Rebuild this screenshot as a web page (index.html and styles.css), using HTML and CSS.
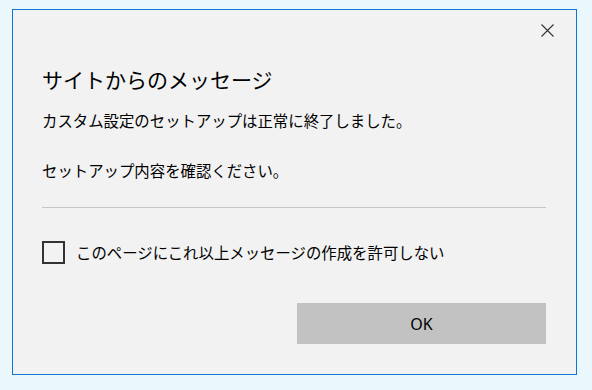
FILE: index.html
```html
<!DOCTYPE html>
<html lang="ja">
<head>
<meta charset="utf-8">
<link rel="stylesheet" href="styles.css">
</head>
<body>
<div class="dialog">
  <div class="header">
    <svg class="close" width="13" height="13" viewBox="0 0 13 13"><path d="M0.5 0.5 L12.5 12.5 M12.5 0.5 L0.5 12.5" stroke="#333" stroke-width="1.1" fill="none"/></svg>
  </div>
  <div class="content">
    <h1 class="title">サイトからのメッセージ</h1>
    <p class="msg msg1">カスタム設定のセットアップは正常に終了しました。</p>
    <p class="msg msg2">セットアップ内容を確認ください。</p>
    <div class="sep"></div>
    <label class="check">
      <span class="box"></span>
      <span class="check-text">このページにこれ以上メッセージの作成を許可しない</span>
    </label>
    <div class="actions">
      <button class="ok">OK</button>
    </div>
  </div>
</div>
</body>
</html>
```
FILE: styles.css
```css
html, body {
  margin: 0;
  padding: 0;
}
body {
  width: 592px;
  height: 390px;
  background: #eaf8fe;
  font-family: "Noto Sans CJK JP", "Noto Sans", sans-serif;
  color: #000;
  overflow: hidden;
}
.dialog {
  box-sizing: border-box;
  margin: 9px 0 0 12px;
  width: 565px;
  height: 366px;
  border: 1px solid #0a78d6;
  background: #f2f2f2;
}
.header {
  display: flex;
  justify-content: flex-end;
  padding: 14px 22px 0 0;
  height: 13px;
}
.close {
  display: block;
}
.content {
  padding: 0 30px 0 29px;
}
.title {
  margin: 27px 0 0 0;
  font-size: 21px;
  font-weight: normal;
  line-height: 30px;
  height: 30px;
}
.msg {
  margin: 0;
  font-size: 15.4px;
  line-height: 24px;
}
.msg1 {
  margin-top: 14px;
}
.msg2 {
  margin-top: 26px;
}
.sep {
  margin-top: 25px;
  height: 1px;
  background: #c6c6c6;
}
.check {
  display: flex;
  align-items: center;
  margin-top: 33px;
  height: 23px;
}
.box {
  box-sizing: border-box;
  width: 23px;
  height: 23px;
  border: 2px solid #333;
  background: #f2f2f2;
  flex: none;
}
.check-text {
  margin-left: 11px;
  font-size: 15.4px;
  line-height: 23px;
}
.actions {
  display: flex;
  justify-content: flex-end;
  margin-top: 39px;
}
.ok {
  width: 249px;
  height: 41px;
  border: none;
  background: #c2c2c2;
  font-family: "Noto Sans", "Noto Sans CJK JP", sans-serif;
  font-size: 16px;
  color: #000;
  padding: 0;
}
```
